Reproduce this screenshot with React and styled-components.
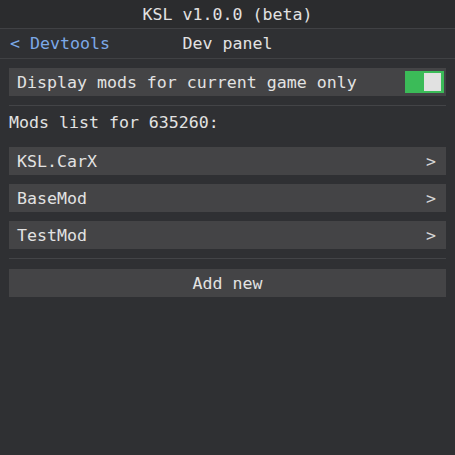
import styled, { createGlobalStyle } from 'styled-components';

const GlobalStyle = createGlobalStyle`
  html, body {
    margin: 0;
    padding: 0;
    background: #2f3033;
  }
  body {
    font-family: "DejaVu Sans Mono", "Liberation Mono", monospace;
    font-size: 16.6px;
    color: #e2e2e2;
  }
`;

const Page = styled.div`
  width: 455px;
  height: 455px;
  background: #2f3033;
  display: flex;
  flex-direction: column;
`;

const TitleBar = styled.div`
  height: 28px;
  display: flex;
  align-items: center;
  justify-content: center;
  background: #2b2c2e;
  border-bottom: 1px solid #404144;
`;

const Nav = styled.div`
  height: 29px;
  display: grid;
  grid-template-columns: 1fr auto 1fr;
  align-items: center;
  border-bottom: 1px solid #404144;
  padding: 0 10px;
`;

const BackLink = styled.a`
  color: #7ca9e8;
  text-decoration: none;
  cursor: pointer;
`;

const NavTitle = styled.span`
  color: #e2e2e2;
`;

const Content = styled.div`
  display: flex;
  flex-direction: column;
  padding: 9px 9px 0;
`;

const Row = styled.div`
  height: 28px;
  display: flex;
  align-items: center;
  justify-content: ${(p) => (p.$center ? 'center' : 'space-between')};
  background: #444446;
  padding: 0 8px;
  margin-bottom: ${(p) => p.$gap ?? 9}px;
  cursor: pointer;
`;

const Toggle = styled.span`
  width: 39px;
  height: 22px;
  background: ${(p) => (p.$on ? '#3bbb58' : '#555')};
  margin-right: -6px;
  display: flex;
  align-items: center;
  justify-content: ${(p) => (p.$on ? 'flex-end' : 'flex-start')};
  padding: 0 3px;
  box-sizing: border-box;
`;

const Knob = styled.span`
  width: 17px;
  height: 18px;
  background: #e1e1e1;
`;

const Divider = styled.div`
  height: 1px;
  background: #434447;
  margin-bottom: ${(p) => p.$after}px;
`;

const Label = styled.div`
  height: 33px;
  display: flex;
  align-items: center;
  margin-bottom: 8px;
`;

const Chevron = styled.span`
  color: #d6d6d6;
  margin-right: 2px;
`;

const mods = ['KSL.CarX', 'BaseMod', 'TestMod'];

export default function App() {
  return (
    <Page>
      <GlobalStyle />
      <TitleBar>KSL v1.0.0 (beta)</TitleBar>
      <Nav>
        <BackLink>&lt; Devtools</BackLink>
        <NavTitle>Dev panel</NavTitle>
        <span />
      </Nav>
      <Content>
        <Row>
          <span>Display mods for current game only</span>
          <Toggle $on>
            <Knob />
          </Toggle>
        </Row>
        <Divider $after={0} />
        <Label>Mods list for 635260:</Label>
        {mods.map((m) => (
          <Row key={m}>
            <span>{m}</span>
            <Chevron>&gt;</Chevron>
          </Row>
        ))}
        <Divider $after={10} />
        <Row $center>Add new</Row>
      </Content>
    </Page>
  );
}
